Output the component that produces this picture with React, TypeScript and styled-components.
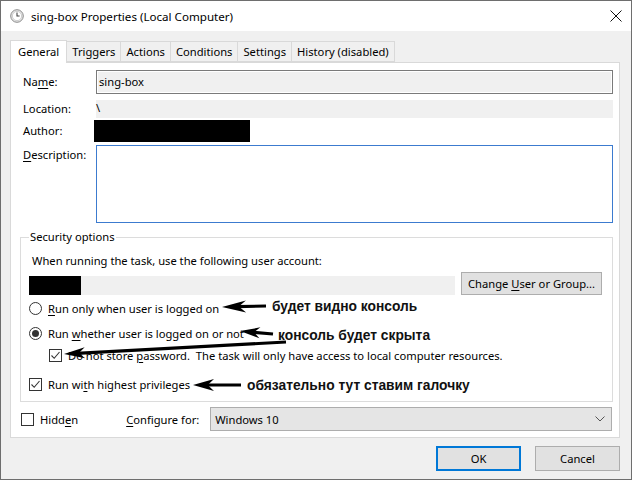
import * as React from "react";
import styled, { createGlobalStyle } from "styled-components";

const UI_FONT = `"Segoe UI", "Noto Sans", "Liberation Sans", sans-serif`;

const GlobalStyle = createGlobalStyle`
  * { box-sizing: border-box; }
  html, body { margin: 0; padding: 0; background: #f0f0f0; }
  body { font-family: ${UI_FONT}; font-size: 11.2px; color: #000; }
`;

const Window = styled.div`
  position: relative;
  width: 632px;
  height: 480px;
  border: 1px solid #6e6e6e;
  background: #f0f0f0;
  display: flex;
  flex-direction: column;
  overflow: hidden;
`;

const TitleBar = styled.div`
  height: 30px;
  background: #fff;
  display: flex;
  align-items: center;
  padding: 0 9px 0 9px;
`;

const TitleText = styled.div`
  flex: 1;
  margin-left: 7px;
  font-size: 11.6px;
  margin-top: 1px;
`;

const CloseButton = styled.div`
  width: 12px;
  height: 12px;
  display: flex;
`;

const Body = styled.div`
  flex: 1;
  padding: 9px 11px 0 9px;
  display: flex;
  flex-direction: column;
`;

const TabRow = styled.div`
  display: flex;
  align-items: flex-end;
  height: 22px;
  position: relative;
  z-index: 1;
`;

const Tab = styled.div<{ active?: boolean }>`
  height: ${p => (p.active ? 23 : 21)}px;
  padding: ${p => (p.active ? "3px 7px 0 7px" : "2px 5px 0 5px")};
  margin-bottom: ${p => (p.active ? -1 : 0)}px;
  background: ${p => (p.active ? "#fff" : "#f0f0f0")};
  border: 1px solid #d9d9d9;
  border-bottom: ${p => (p.active ? "none" : "1px solid #d9d9d9")};
  border-left: ${p => (p.active ? "1px solid #d9d9d9" : "none")};
  white-space: nowrap;
  line-height: 16px;
`;

const Panel = styled.div`
  background: #fff;
  border: 1px solid #d9d9d9;
  height: 376px;
  padding: 7px 6px 0 12px;
  display: flex;
  flex-direction: column;
`;

const FieldRow = styled.div<{ gap?: number }>`
  display: flex;
  align-items: flex-start;
  margin-top: ${p => p.gap ?? 0}px;
`;

const Label = styled.div<{ pad?: number }>`
  width: 73px;
  padding-top: ${p => p.pad ?? 0}px;
  line-height: 16px;
`;

const ReadOnlyBox = styled.div<{ h: number; framed?: boolean }>`
  flex: 1;
  height: ${p => p.h}px;
  background: #f0f0f0;
  border: ${p => (p.framed ? "1px solid #7a7a7a" : "none")};
  box-shadow: ${p => (p.framed ? "inset 0 0 0 1px #fff" : "none")};
  padding: ${p => (p.framed ? "3px 2px" : "0 0")};
  line-height: 16px;
`;

const Redacted = styled.div<{ w: number; h: number }>`
  width: ${p => p.w}px;
  height: ${p => p.h}px;
  background: #000;
  flex: none;
`;

const TextArea = styled.div`
  flex: 1;
  height: 78px;
  border: 1px solid #3c7bcf;
  background: #fff;
`;

const Group = styled.fieldset`
  margin: 7px 0 0 -3px;
  width: 593px;
  height: 172px;
  border: 1px solid #dcdcdc;
  padding: 9px 9px 0 8px;
  display: flex;
  flex-direction: column;
  min-width: 0;
`;

const Legend = styled.legend`
  padding: 0 1px;
  margin-left: 0;
  line-height: 14px;
`;

const Hint = styled.div`
  margin-left: 3px;
  line-height: 16px;
`;

const AccountRow = styled.div`
  display: flex;
  align-items: flex-start;
  margin-top: 3px;
`;

const AccountBox = styled.div`
  width: 426px;
  height: 19px;
  margin-top: 4px;
  background: #f0f0f0;
  display: flex;
`;

const Button = styled.div<{ primary?: boolean; w: number }>`
  width: ${p => p.w}px;
  height: ${p => (p.primary ? 25 : 23)}px;
  background: #e1e1e1;
  border: ${p => (p.primary ? "2px solid #0078d7" : "1px solid #adadad")};
  display: flex;
  align-items: center;
  justify-content: center;
  white-space: nowrap;
  flex: none;
`;

const OptionRow = styled.div<{ indent?: number; gap?: number }>`
  display: flex;
  align-items: center;
  margin-left: ${p => p.indent ?? 0}px;
  margin-top: ${p => p.gap ?? 0}px;
  height: 16px;
  white-space: nowrap;
`;

const Radio = styled.span<{ on?: boolean }>`
  width: 13px;
  height: 13px;
  border-radius: 50%;
  border: 1px solid #333;
  background: #fff;
  margin-right: 6px;
  flex: none;
  display: flex;
  align-items: center;
  justify-content: center;
  &::after {
    content: "";
    width: 7px;
    height: 7px;
    border-radius: 50%;
    background: ${p => (p.on ? "#333" : "transparent")};
  }
`;

const Box = styled.span`
  width: 13px;
  height: 13px;
  border: 1px solid #333;
  background: #fff;
  margin-right: 6px;
  flex: none;
  display: flex;
  align-items: center;
  justify-content: center;
`;

const Key = styled.span`
  text-decoration: underline;
  text-underline-offset: 2px;
`;

const BottomRow = styled.div`
  display: flex;
  align-items: center;
  margin-top: 5px;
  margin-left: -2px;
`;

const ConfigLabel = styled.div`
  margin-left: 48px;
  width: 84px;
`;

const Select = styled.div`
  flex: 1;
  height: 24px;
  margin-right: 1px;
  background: #e5e5e5;
  border: 1px solid #adadad;
  display: flex;
  align-items: center;
  padding: 0 6px 0 4px;
  justify-content: space-between;
`;

const Footer = styled.div`
  display: flex;
  justify-content: flex-end;
  gap: 14px;
  margin-top: 8px;
`;

const Overlay = styled.svg`
  position: absolute;
  left: -1px;
  top: -1px;
  pointer-events: none;
`;

const Note = styled.div<{ x: number; y: number }>`
  position: absolute;
  left: ${p => p.x}px;
  top: ${p => p.y}px;
  font-family: "Liberation Sans", Arial, sans-serif;
  font-weight: bold;
  font-size: 13.8px;
  line-height: 16px;
  white-space: nowrap;
  color: #111;
`;

function Check() {
  return (
    <svg width="11" height="11" viewBox="0 0 11 11">
      <path d="M1.5 5.5 L4.2 8.3 L9.5 2" fill="none" stroke="#333" strokeWidth="1.1" />
    </svg>
  );
}

function Arrow({ from, to, head, half }: { from: [number, number]; to: [number, number]; head: number; half: number }) {
  const [x1, y1] = from;
  const [x2, y2] = to;
  const dx = x1 - x2;
  const dy = y1 - y2;
  const len = Math.hypot(dx, dy);
  const ux = dx / len;
  const uy = dy / len;
  const bx = x2 + ux * head;
  const by = y2 + uy * head;
  const nx = -uy;
  const ny = ux;
  const pts = [
    [x2, y2],
    [bx + nx * half, by + ny * half],
    [x2 + ux * head * 0.7, y2 + uy * head * 0.7],
    [bx - nx * half, by - ny * half],
  ]
    .map(p => p.join(","))
    .join(" ");
  return (
    <g>
      <line x1={x1} y1={y1} x2={x2 + ux * head * 0.6} y2={y2 + uy * head * 0.6} stroke="#000" strokeWidth="3.2" />
      <polygon points={pts} fill="#000" />
    </g>
  );
}

export default function App() {
  return (
    <>
      <GlobalStyle />
      <Window>
        <TitleBar>
          <svg width="14" height="14" viewBox="0 0 14 14">
            <circle cx="7" cy="7" r="6.3" fill="#e8e8e8" stroke="#8a8a8a" strokeWidth="1" />
            <circle cx="7" cy="7" r="4.6" fill="#fff" stroke="#b5b5b5" strokeWidth="0.6" />
            <path d="M7 3.6 V7 H9.6" fill="none" stroke="#444" strokeWidth="1.1" />
          </svg>
          <TitleText>sing-box Properties (Local Computer)</TitleText>
          <CloseButton>
            <svg width="12" height="12" viewBox="0 0 12 12">
              <path d="M0.5 0.5 L11.5 11.5 M11.5 0.5 L0.5 11.5" stroke="#111" strokeWidth="1" />
            </svg>
          </CloseButton>
        </TitleBar>
        <Body>
          <TabRow>
            <Tab active>General</Tab>
            <Tab>Triggers</Tab>
            <Tab>Actions</Tab>
            <Tab>Conditions</Tab>
            <Tab>Settings</Tab>
            <Tab>History (disabled)</Tab>
          </TabRow>
          <Panel>
            <FieldRow>
              <Label pad={4}>
                Na<Key>m</Key>e:
              </Label>
              <ReadOnlyBox h={24} framed>
                sing-box
              </ReadOnlyBox>
            </FieldRow>
            <FieldRow gap={6}>
              <Label pad={1}>Location:</Label>
              <ReadOnlyBox h={18}>\</ReadOnlyBox>
            </FieldRow>
            <FieldRow gap={2}>
              <Label pad={3}>Author:</Label>
              <Redacted w={156} h={22} style={{ marginLeft: -2 }} />
            </FieldRow>
            <FieldRow gap={3}>
              <Label pad={2}>
                <Key>D</Key>escription:
              </Label>
              <TextArea />
            </FieldRow>
            <Group>
              <Legend>Security options</Legend>
              <Hint>When running the task, use the following user account:</Hint>
              <AccountRow>
                <AccountBox>
                  <Redacted w={52} h={19} />
                </AccountBox>
                <Button w={141} style={{ marginLeft: 6 }}>
                  Change&nbsp;<Key>U</Key>ser or Group...
                </Button>
              </AccountRow>
              <OptionRow gap={5}>
                <Radio />
                <span>
                  <Key>R</Key>un only when user is logged on
                </span>
              </OptionRow>
              <OptionRow gap={9}>
                <Radio on />
                <span>
                  Run <Key>w</Key>hether user is logged on or not
                </span>
              </OptionRow>
              <OptionRow gap={6} indent={20}>
                <Box>
                  <Check />
                </Box>
                <span>
                  Do not store <Key>p</Key>assword.&nbsp; The task will only have access to local computer resources.
                </span>
              </OptionRow>
              <OptionRow gap={13}>
                <Box>
                  <Check />
                </Box>
                <span>
                  Run wi<Key>t</Key>h highest privileges
                </span>
              </OptionRow>
            </Group>
            <BottomRow>
              <Box />
              <span>
                Hidd<Key>e</Key>n
              </span>
              <ConfigLabel>
                <Key>C</Key>onfigure for:
              </ConfigLabel>
              <Select>
                <span>Windows 10</span>
                <svg width="10" height="6" viewBox="0 0 10 6">
                  <path d="M0.5 0.5 L5 5 L9.5 0.5" fill="none" stroke="#555" strokeWidth="1" />
                </svg>
              </Select>
            </BottomRow>
          </Panel>
          <Footer>
            <Button primary w={85}>
              OK
            </Button>
            <Button w={85} style={{ height: 25 }}>
              Cancel
            </Button>
          </Footer>
        </Body>
        <Overlay width="632" height="480" viewBox="0 0 632 480">
          <Arrow from={[266, 306]} to={[222, 307]} head={24} half={6} />
          <Arrow from={[273, 334]} to={[240, 331]} head={20} half={5.5} />
          <Arrow from={[286, 342]} to={[64, 354]} head={21} half={5.5} />
          <Arrow from={[241, 385]} to={[193, 385]} head={21} half={6} />
        </Overlay>
        <Note x={271} y={298}>будет видно консоль</Note>
        <Note x={277} y={327}>консоль будет скрыта</Note>
        <Note x={246} y={377}>обязательно тут ставим галочку</Note>
      </Window>
    </>
  );
}
